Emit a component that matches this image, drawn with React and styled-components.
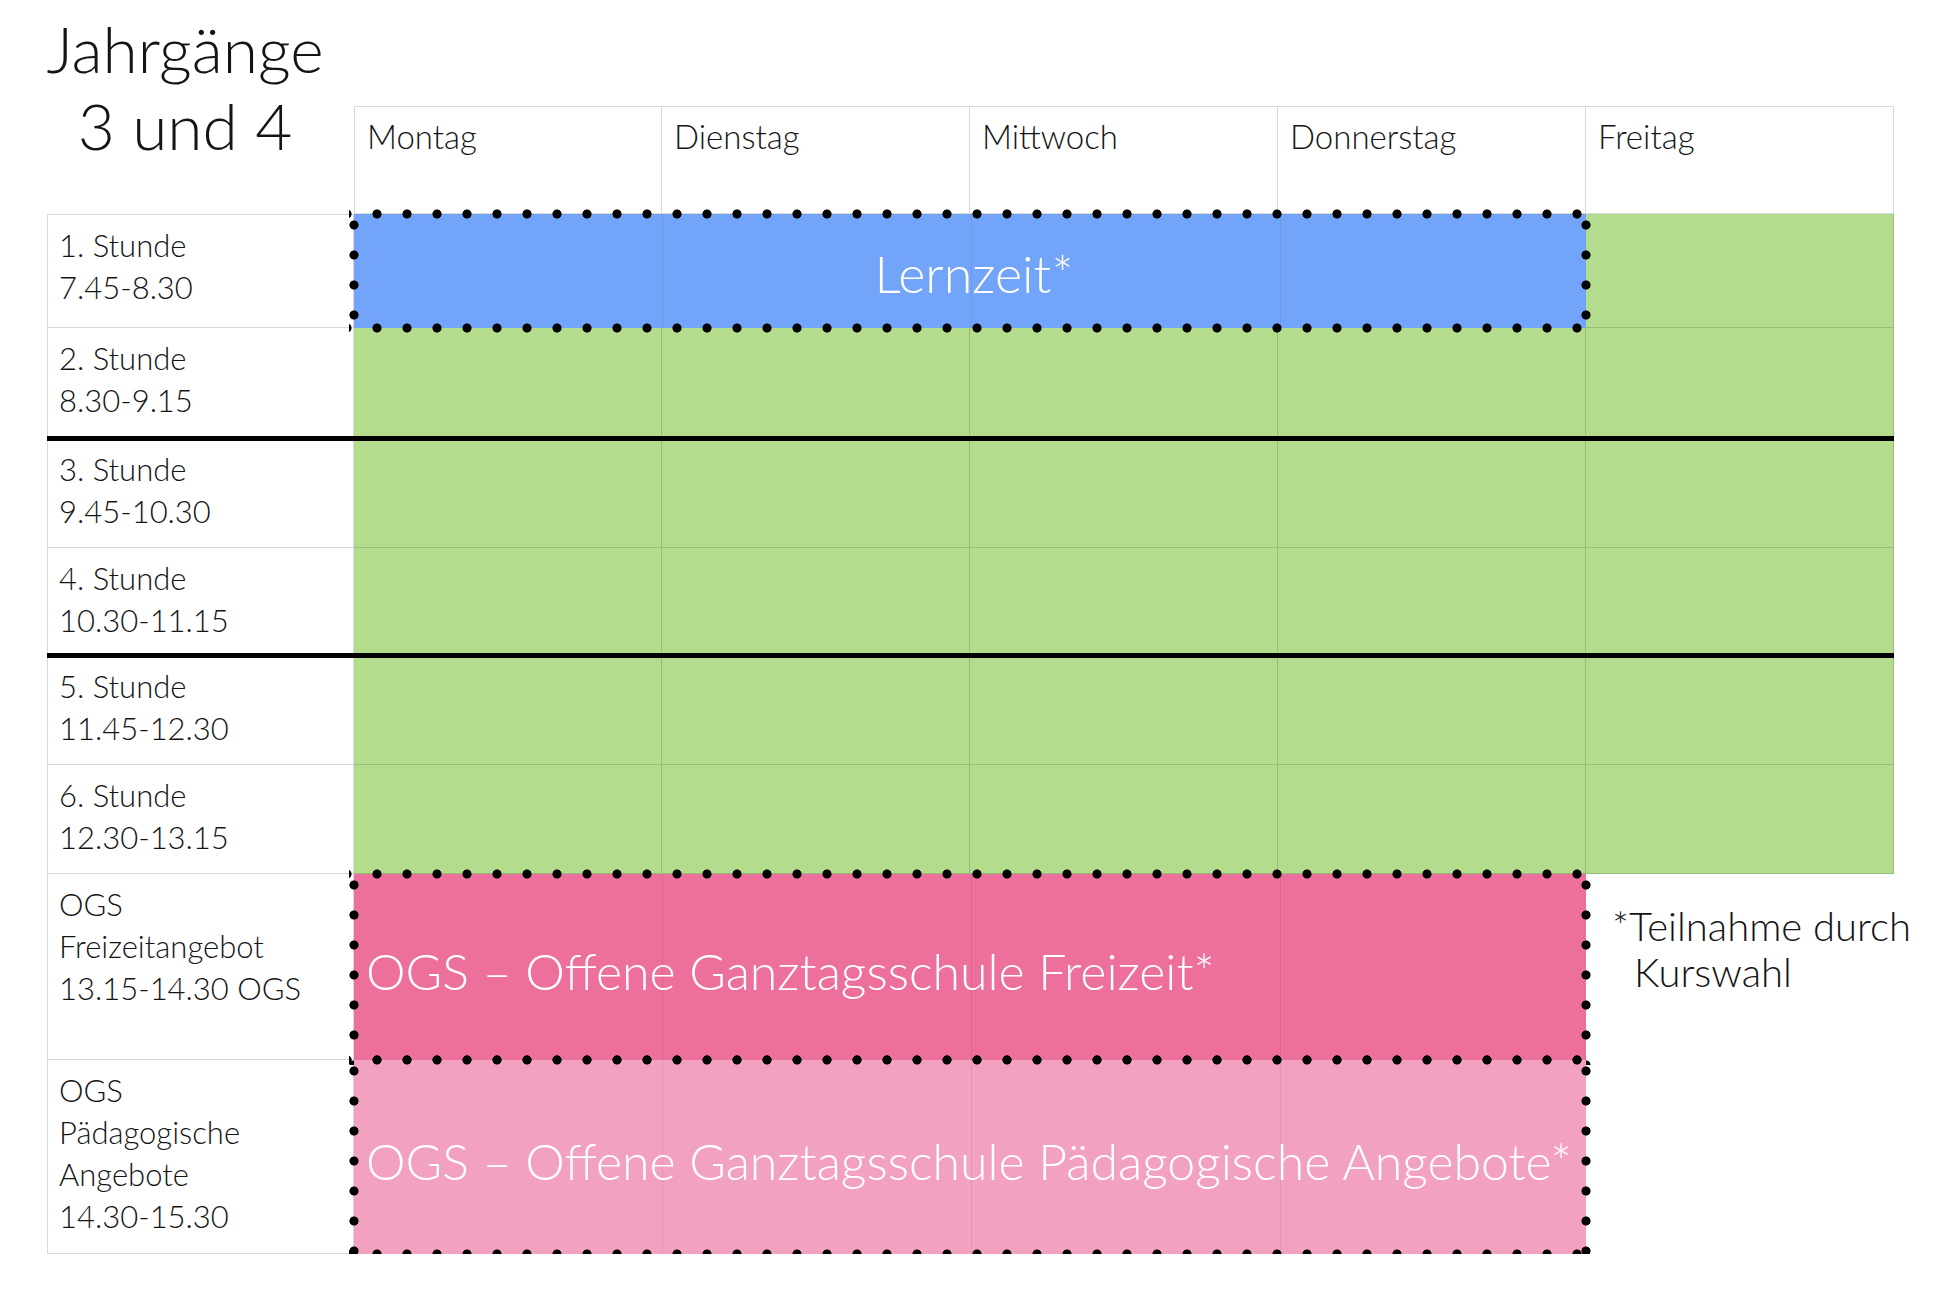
import React from "react";
import styled, { createGlobalStyle, css } from "styled-components";

const GlobalStyle = createGlobalStyle`
  html, body {
    margin: 0;
    padding: 0;
    background: #ffffff;
  }
  body {
    font-family: "Lato", "Open Sans", "DejaVu Sans", sans-serif;
    font-weight: 300;
    color: #141414;
  }
`;

const grid = "rgba(0, 0, 0, 0.15)";

const days = ["Montag", "Dienstag", "Mittwoch", "Donnerstag", "Freitag"];

const stunden = [
  ["1. Stunde", "7.45-8.30"],
  ["2. Stunde", "8.30-9.15"],
  ["3. Stunde", "9.45-10.30"],
  ["4. Stunde", "10.30-11.15"],
  ["5. Stunde", "11.45-12.30"],
  ["6. Stunde", "12.30-13.15"],
  ["OGS", "Freizeitangebot", "13.15-14.30 OGS"],
  ["OGS", "Pädagogische", "Angebote", "14.30-15.30"],
];

// Zeilen, über denen die dicke schwarze Linie liegt (Pausen)
const pausen = [2, 4];

const Sheet = styled.div`
  display: grid;
  grid-template-columns: 307px repeat(5, 308px);
  grid-template-rows: 106px 108px 114px 111px 109px 108px 109px 109px 186px 194px;
  margin-left: 47px;
`;

const Title = styled.h1`
  grid-column: 1;
  grid-row: 1 / 3;
  align-self: start;
  width: 290px;
  margin: 0 0 0 -7px;
  padding-top: 10px;
  font-size: 64px;
  font-weight: 300;
  line-height: 77px;
  text-align: center;
`;

const DayHead = styled.div`
  grid-row: 2;
  grid-column: ${(p) => p.$col};
  box-sizing: border-box;
  padding: 8px 0 0 12px;
  font-size: 33px;
  line-height: 42px;
  background: #fff;
  border-top: 1px solid ${grid};
  border-right: 1px solid ${grid};
  border-bottom: 1px solid ${grid};
  ${(p) =>
    p.$first &&
    css`
      border-left: 1px solid ${grid};
    `}
`;

const Label = styled.div`
  grid-column: 1;
  grid-row: ${(p) => p.$row};
  box-sizing: border-box;
  padding: 9px 0 0 11px;
  font-size: 31px;
  line-height: 42px;
  border-left: 1px solid ${grid};
  border-right: 1px solid ${grid};
  border-bottom: 1px solid ${grid};
  ${(p) =>
    p.$first &&
    css`
      border-top: 1px solid ${grid};
    `}

  span {
    display: block;
    white-space: nowrap;
  }
`;

const Slot = styled.div`
  grid-row: ${(p) => p.$row};
  grid-column: ${(p) => p.$col};
  box-sizing: border-box;
  background: #b3dc8c;
  border-right: 1px solid ${grid};
  border-bottom: 1px solid ${grid};
`;

const Pause = styled.div`
  grid-column: 1 / -1;
  grid-row: ${(p) => p.$row};
  align-self: start;
  position: relative;
  z-index: 2;
  height: 5px;
  margin-top: -3px;
  background: #000;
`;

const dot = "radial-gradient(circle, #000 0 4.2px, transparent 4.9px)";

const Block = styled.div`
  grid-row: ${(p) => p.$row};
  grid-column: 2 / span 4;
  position: relative;
  z-index: 1;
  box-sizing: border-box;
  display: flex;
  align-items: center;
  justify-content: ${(p) => (p.$center ? "center" : "flex-start")};
  padding: ${(p) => (p.$center ? "4px 0 0 8px" : "8px 0 0 12px")};
  background-color: ${(p) => p.$bg};
  background-image: repeating-linear-gradient(
    90deg,
    transparent 0 308px,
    rgba(0, 0, 0, 0.07) 308px 309px
  );
  color: #fff;
  font-size: ${(p) => p.$size}px;
  line-height: 1;
  white-space: nowrap;

  &::after {
    content: "";
    position: absolute;
    inset: -5px;
    pointer-events: none;
    background:
      ${dot} 13px 0 / 30px 10px repeat-x,
      ${dot} 13px 100% / 30px 10px repeat-x,
      ${dot} 0 1px / 10px 30px repeat-y,
      ${dot} 100% 1px / 10px 30px repeat-y;
  }
`;

const Note = styled.div`
  grid-row: 9;
  grid-column: 6;
  padding: 29px 0 0 48px;
  text-indent: -22px;
  font-size: 40px;
  line-height: 46px;
  white-space: nowrap;
`;

export default function App() {
  return (
    <>
      <GlobalStyle />
      <Sheet>
        <Title>
          Jahrgänge
          <br />3 und 4
        </Title>

        {days.map((d, i) => (
          <DayHead key={d} $col={i + 2} $first={i === 0}>
            {d}
          </DayHead>
        ))}

        {stunden.map((lines, r) => (
          <Label key={r} $row={r + 3} $first={r === 0}>
            {lines.map((l) => (
              <span key={l}>{l}</span>
            ))}
          </Label>
        ))}

        {/* Grüne Unterrichtsstunden */}
        {stunden.slice(0, 6).map((_, r) =>
          days.map((d, c) =>
            r === 0 && c < 4 ? null : (
              <Slot key={`${r}-${d}`} $row={r + 3} $col={c + 2} />
            )
          )
        )}

        {pausen.map((r) => (
          <Pause key={r} $row={r + 3} />
        ))}

        <Block $row={3} $bg="#72a5fa" $size={52} $center>
          Lernzeit*
        </Block>
        <Block $row={9} $bg="#ec6f9c" $size={50}>
          OGS – Offene Ganztagsschule Freizeit*
        </Block>
        <Block $row={10} $bg="#f2a2c0" $size={50}>
          OGS – Offene Ganztagsschule Pädagogische Angebote*
        </Block>

        <Note>
          *Teilnahme durch
          <br />
          Kurswahl
        </Note>
      </Sheet>
    </>
  );
}
